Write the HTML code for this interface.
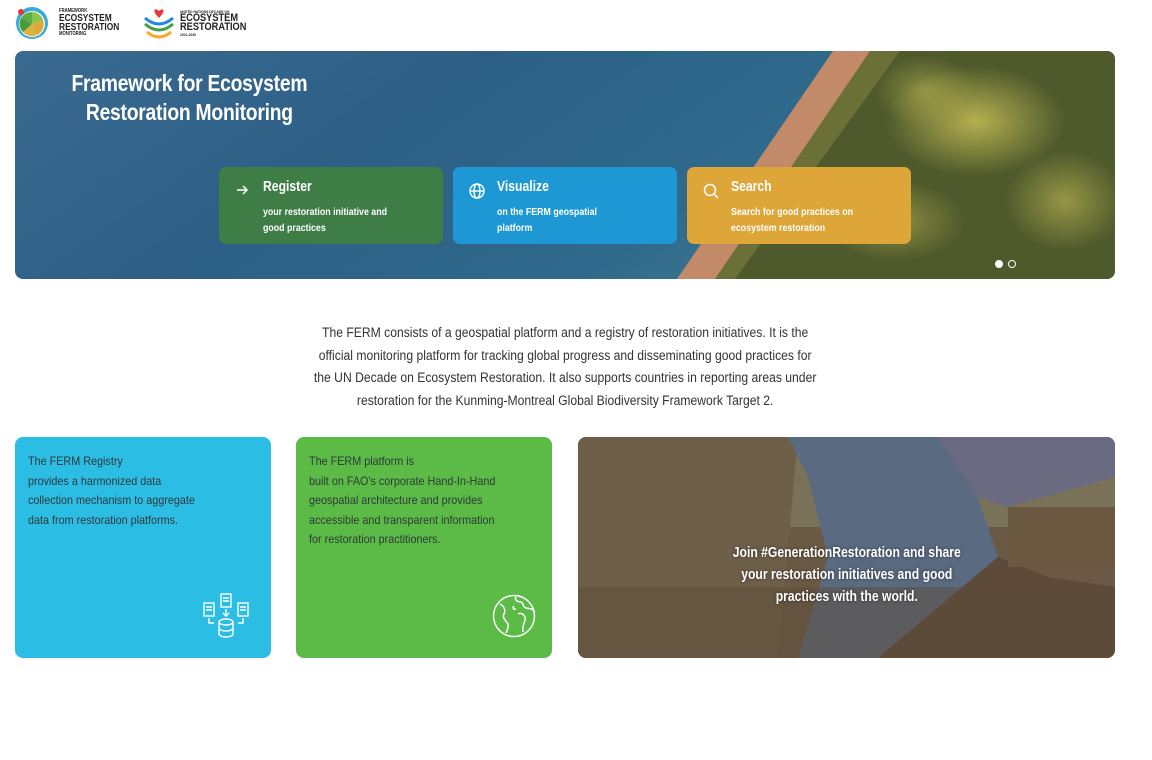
<!DOCTYPE html>
<html><head><meta charset="utf-8"><style>
*{margin:0;padding:0;box-sizing:border-box}
body{width:1152px;height:760px;background:#fff;font-family:"Liberation Sans",Arial,sans-serif;position:relative;overflow:hidden;color:#333}
.abs{position:absolute}
.n{display:inline-block;transform:scaleX(.84);transform-origin:left top;white-space:nowrap}
.nc{display:inline-block;transform:scaleX(.84);transform-origin:center top;white-space:nowrap}
.hero{left:15px;top:51px;width:1100px;height:228px;border-radius:8px;overflow:hidden}
.hero h1{position:absolute;left:0;top:18px;width:348px;color:#fff;font-size:23px;line-height:29px;font-weight:bold;text-align:center;letter-spacing:-0.3px}
.btn{position:absolute;top:116px;width:224px;height:77px;border-radius:7px;color:#fff}
.btn b{position:absolute;left:44px;top:12px;font-size:14.5px}
.btn span{position:absolute;left:44px;top:37px;font-size:10.5px;line-height:16px;font-weight:bold}
.btn svg{position:absolute;left:16px;top:16px}
.intro{left:215px;top:322px;width:700px;text-align:center;font-size:13.5px;line-height:22.5px;color:#333}
.intro .nc{transform:scaleX(.9)}
.card{top:437px;width:256px;height:221px;border-radius:8px}
.card p{position:absolute;left:13px;top:15px;font-size:12px;line-height:19.5px;color:#2d3a3a;transform:scaleX(.9)}
.photo{left:578px;top:437px;width:537px;height:221px;border-radius:8px;overflow:hidden}
.photo div{position:absolute;left:0;top:105px;width:537px;text-align:center;color:#fff;font-weight:bold;font-size:14.5px;line-height:22px;text-shadow:0 0 4px rgba(0,0,0,.5)}
</style></head><body>
<svg class="abs" style="left:15px;top:6px" width="34" height="34" viewBox="0 0 34 34"><circle cx="17" cy="17" r="16" fill="#3aaad8"/><circle cx="17" cy="18" r="13" fill="#fff"/><path d="M17 18 L6 12 A12 12 0 0 1 17 6Z" fill="#5bb043"/><path d="M17 18 L17 6 A12 12 0 0 1 28 14Z" fill="#8bc34a"/><path d="M17 18 L28 14 A12 12 0 0 1 22 29Z" fill="#d9a93a"/><path d="M17 18 L22 29 A12 12 0 0 1 8 26Z" fill="#e0b040"/><path d="M17 18 L8 26 A12 12 0 0 1 6 12Z" fill="#4a9a3a"/><circle cx="6" cy="6" r="3" fill="#e33"/></svg>
<div class="abs" style="left:59px;top:9px;font-size:5px;font-weight:bold;color:#222;line-height:5px"><span class="n">FRAMEWORK<br><span style="font-size:10px;line-height:9px">ECOSYSTEM<br>RESTORATION</span><br>MONITORING</span></div>
<svg class="abs" style="left:142px;top:6px" width="34" height="34" viewBox="0 0 34 34"><path d="M17 12 C10 5 12 1 17 5 C22 1 24 5 17 12Z" fill="#e53935"/><path d="M3 12 Q17 24 31 12" stroke="#1e88e5" stroke-width="3" fill="none"/><path d="M3 18 Q17 30 31 18" stroke="#43a047" stroke-width="3" fill="none"/><path d="M5 26 Q17 36 29 26" stroke="#f9a825" stroke-width="3" fill="none"/></svg>
<div class="abs" style="left:180px;top:9px;font-size:4px;font-weight:bold;color:#222;line-height:5px"><span class="n">UNITED NATIONS DECADE ON<br><span style="font-size:11px;line-height:9px">ECOSYSTEM<br>RESTORATION</span><br>2021-2030</span></div>

<div class="abs hero">
<svg class="abs" style="left:0;top:0" width="1100" height="228" viewBox="0 0 1100 228">
<defs><linearGradient id="sea" x1="0" y1="0" x2="1" y2="0.3"><stop offset="0" stop-color="#3a6a90"/><stop offset=".4" stop-color="#2d5f86"/><stop offset=".75" stop-color="#2f6a8c"/><stop offset="1" stop-color="#4a8090"/></linearGradient>
<radialGradient id="f1" cx=".5" cy=".5" r=".5"><stop offset="0" stop-color="#b5b050"/><stop offset="1" stop-color="#b5b050" stop-opacity="0"/></radialGradient></defs>
<rect width="1100" height="228" fill="url(#sea)"/>
<polygon points="820,0 1100,0 1100,228 690,228" fill="#4f5a2c"/>
<polygon points="818,0 866,0 700,228 662,228" fill="#c28a68"/>
<polygon points="855,0 885,0 720,228 700,228" fill="#6a7036"/>
<ellipse cx="960" cy="70" rx="90" ry="55" fill="url(#f1)"/>
<ellipse cx="1050" cy="150" rx="60" ry="50" fill="url(#f1)" opacity=".7"/>
<ellipse cx="880" cy="170" rx="70" ry="40" fill="url(#f1)" opacity=".6"/>
<ellipse cx="910" cy="40" rx="50" ry="35" fill="url(#f1)" opacity=".6"/>
</svg>
<h1><span class="nc">Framework for Ecosystem<br>Restoration Monitoring</span></h1>
<div class="btn" style="left:204px;background:#3f7d46"><svg width="14" height="14" viewBox="0 0 14 14"><path d="M2 7H12M8 3L12 7L8 11" stroke="#fff" stroke-width="1.5" fill="none"/></svg><b class="n">Register</b><span class="n">your restoration initiative and<br>good practices</span></div>
<div class="btn" style="left:438px;background:#1e98d4"><svg width="16" height="16" viewBox="0 0 16 16" fill="none" stroke="#fff" stroke-width="1.4"><circle cx="8" cy="8" r="7"/><ellipse cx="8" cy="8" rx="3" ry="7"/><path d="M1 8H15"/></svg><b class="n">Visualize</b><span class="n">on the FERM geospatial<br>platform</span></div>
<div class="btn" style="left:672px;background:#dea639"><svg width="16" height="16" viewBox="0 0 16 16" fill="none" stroke="#fff" stroke-width="1.5"><circle cx="7" cy="7" r="5.5"/><path d="M11 11L15 15"/></svg><b class="n">Search</b><span class="n">Search for good practices on<br>ecosystem restoration</span></div>
<div class="abs" style="left:980px;top:209px;width:8px;height:8px;border-radius:50%;background:#fff"></div>
<div class="abs" style="left:993px;top:209px;width:8px;height:8px;border-radius:50%;border:1.3px solid #fff"></div>
</div>

<div class="abs intro"><span class="nc">The FERM consists of a geospatial platform and a registry of restoration initiatives. It is the<br>official monitoring platform for tracking global progress and disseminating good practices for<br>the UN Decade on Ecosystem Restoration. It also supports countries in reporting areas under<br>restoration for the Kunming-Montreal Global Biodiversity Framework Target 2.</span></div>

<div class="abs card" style="left:15px;background:#2bbde3"><p class="n">The FERM Registry<br>provides a harmonized data<br>collection mechanism to aggregate<br>data from restoration platforms.</p>
<svg class="abs" style="left:187px;top:155px" width="48" height="46" viewBox="0 0 48 46" fill="none" stroke="#fff" stroke-width="1.4"><rect x="2" y="11" width="10" height="13"/><rect x="19" y="2" width="10" height="13"/><rect x="36" y="11" width="10" height="13"/><path d="M4 15H10M4 18H10M21 6H27M21 9H27M38 15H44M38 18H44M24 17V24M21 21L24 24L27 21M7 26V31H12M41 26V31H36"/><ellipse cx="24" cy="30" rx="7" ry="3"/><path d="M17 30V42M31 30V42M17 36A7 3 0 0 0 31 36M17 42A7 3 0 0 0 31 42"/></svg></div>
<div class="abs card" style="left:296px;background:#5cba47"><p class="n">The FERM platform is<br>built on FAO's corporate Hand-In-Hand<br>geospatial architecture and provides<br>accessible and transparent information<br>for restoration practitioners.</p>
<svg class="abs" style="left:196px;top:157px" width="44" height="44" viewBox="0 0 44 44" fill="none" stroke="#fff" stroke-width="1.5"><circle cx="22" cy="22" r="20.5"/><path d="M8 10C12 12 14 16 12 20C10 24 14 27 16 30C17 33 15 36 14 39M24 3C22 6 26 8 29 8C32 9 30 13 34 14C37 15 40 14 42 17M26 20C30 18 34 22 33 26C32 30 30 32 31 38M22 12C20 14 22 16 24 15"/></svg></div>
<div class="abs photo">
<svg class="abs" style="left:0;top:0" width="537" height="221" viewBox="0 0 537 221">
<rect width="537" height="221" fill="#6a5a45"/>
<rect width="537" height="90" fill="#7a7258"/>
<polygon points="0,0 220,0 200,221 0,221" fill="#6e5f48"/>
<polygon points="210,0 360,0 400,60 420,120 300,221 220,221 250,120 230,40" fill="#5a6a80"/>
<polygon points="360,0 537,0 537,40 430,70 400,60" fill="#6a6a80"/>
<polygon points="300,221 420,120 470,140 537,150 537,221" fill="#5d4a38"/>
<rect x="430" y="70" width="107" height="60" fill="#6a5840"/>
<rect x="0" y="150" width="537" height="71" fill="#5e4c3a" opacity=".5"/>
</svg>
<div><span class="nc">Join #GenerationRestoration and share<br>your restoration initiatives and good<br>practices with the world.</span></div></div>
</body></html>
